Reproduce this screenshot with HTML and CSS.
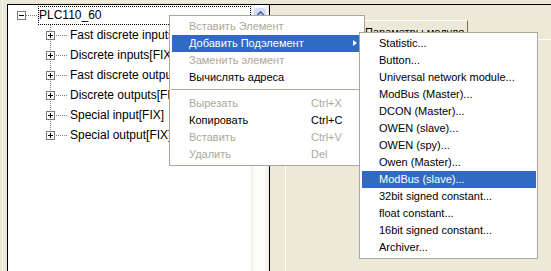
FILE: index.html
```html
<!DOCTYPE html>
<html lang="ru">
<head>
<meta charset="utf-8">
<title>PLC110_60</title>
<link rel="stylesheet" href="styles.css">
</head>
<body>
<div class="screen">
  <div class="frame">
    <div class="treebox">
      <div class="tree">
        <div class="row root">
          <svg class="exp" width="9" height="9" viewBox="0 0 9 9"><rect x="0.5" y="0.5" width="8" height="8" fill="#fff" stroke="#7a7a7a"/><path d="M2 4.5h5" stroke="#000"/></svg>
          <span class="conn root-conn"></span>
          <span class="label focus">PLC110_60</span>
        </div>
        <div class="children">
          <div class="row child">
            <svg class="exp" width="9" height="9" viewBox="0 0 9 9"><rect x="0.5" y="0.5" width="8" height="8" fill="#fff" stroke="#7a7a7a"/><path d="M2 4.5h5M4.5 2v5" stroke="#000"/></svg>
            <span class="conn"></span>
            <span class="label">Fast discrete inputs[FIX]</span>
          </div>
          <div class="row child">
            <svg class="exp" width="9" height="9" viewBox="0 0 9 9"><rect x="0.5" y="0.5" width="8" height="8" fill="#fff" stroke="#7a7a7a"/><path d="M2 4.5h5M4.5 2v5" stroke="#000"/></svg>
            <span class="conn"></span>
            <span class="label">Discrete inputs[FIX]</span>
          </div>
          <div class="row child">
            <svg class="exp" width="9" height="9" viewBox="0 0 9 9"><rect x="0.5" y="0.5" width="8" height="8" fill="#fff" stroke="#7a7a7a"/><path d="M2 4.5h5M4.5 2v5" stroke="#000"/></svg>
            <span class="conn"></span>
            <span class="label">Fast discrete outputs[FIX]</span>
          </div>
          <div class="row child">
            <svg class="exp" width="9" height="9" viewBox="0 0 9 9"><rect x="0.5" y="0.5" width="8" height="8" fill="#fff" stroke="#7a7a7a"/><path d="M2 4.5h5M4.5 2v5" stroke="#000"/></svg>
            <span class="conn"></span>
            <span class="label">Discrete outputs[FIX]</span>
          </div>
          <div class="row child">
            <svg class="exp" width="9" height="9" viewBox="0 0 9 9"><rect x="0.5" y="0.5" width="8" height="8" fill="#fff" stroke="#7a7a7a"/><path d="M2 4.5h5M4.5 2v5" stroke="#000"/></svg>
            <span class="conn"></span>
            <span class="label">Special input[FIX]</span>
          </div>
          <div class="row child">
            <svg class="exp" width="9" height="9" viewBox="0 0 9 9"><rect x="0.5" y="0.5" width="8" height="8" fill="#fff" stroke="#7a7a7a"/><path d="M2 4.5h5M4.5 2v5" stroke="#000"/></svg>
            <span class="conn"></span>
            <span class="label">Special output[FIX]</span>
          </div>
        </div>
      </div>
      <div class="vscroll">
        <div class="sb-btn">
          <svg width="7" height="5" viewBox="0 0 7 5"><path d="M0.5 4L3.5 1L6.5 4" fill="none" stroke="#4d6185" stroke-width="1.6"/></svg>
        </div>
      </div>
    </div>
    <div class="rightpane">
      <div class="tabctl">
        <div class="tabstrip">
          <div class="tab">Параметры модуля</div>
        </div>
        <div class="tabpage"></div>
      </div>
    </div>
  </div>

  <div class="menu ctx">
    <div class="item disabled"><span class="text">Вставить Элемент</span></div>
    <div class="item hot"><span class="text">Добавить Подэлемент</span><span class="arrow"></span></div>
    <div class="item disabled"><span class="text">Заменить элемент</span></div>
    <div class="item"><span class="text">Вычислять адреса</span></div>
    <div class="sep"></div>
    <div class="item disabled"><span class="text">Вырезать</span><span class="key">Ctrl+X</span></div>
    <div class="item"><span class="text">Копировать</span><span class="key">Ctrl+C</span></div>
    <div class="item disabled"><span class="text">Вставить</span><span class="key">Ctrl+V</span></div>
    <div class="item disabled"><span class="text">Удалить</span><span class="key">Del</span></div>
  </div>

  <div class="menu sub">
    <div class="item"><span class="text">Statistic...</span></div>
    <div class="item"><span class="text">Button...</span></div>
    <div class="item"><span class="text">Universal network module...</span></div>
    <div class="item"><span class="text">ModBus (Master)...</span></div>
    <div class="item"><span class="text">DCON (Master)...</span></div>
    <div class="item"><span class="text">OWEN (slave)...</span></div>
    <div class="item"><span class="text">OWEN (spy)...</span></div>
    <div class="item"><span class="text">Owen (Master)...</span></div>
    <div class="item hot"><span class="text">ModBus (slave)...</span></div>
    <div class="item"><span class="text">32bit signed constant...</span></div>
    <div class="item"><span class="text">float constant...</span></div>
    <div class="item"><span class="text">16bit signed constant...</span></div>
    <div class="item"><span class="text">Archiver...</span></div>
  </div>
</div>
</body>
</html>
```

FILE: styles.css
```css
html, body {
  margin: 0;
  padding: 0;
  background: #ECE9D8;
}

.screen {
  position: relative;
  width: 551px;
  height: 271px;
  overflow: hidden;
  box-sizing: border-box;
  padding: 4px 0 0 7px;
  display: flex;
  background:
    linear-gradient(to right, transparent 2px, #F8F7F2 2px, #F8F7F2 3px, transparent 3px),
    #ECE9D8;
  font-family: "Liberation Sans", Arial, sans-serif;
}

.frame {
  flex: 1;
  display: flex;
  border-top: 1px solid #000;
  border-left: 1px solid #000;
}

.treebox {
  display: flex;
  border-right: 1px solid #000;
}

/* ---------- tree ---------- */
.tree {
  width: 243px;
  background: #fff;
  font-size: 12px;
  color: #000;
}

.row {
  display: flex;
  align-items: flex-start;
  height: 20px;
}

.root {
  padding-left: 9px;
}

.child {
  padding-left: 38px;
}

.exp {
  flex: none;
  margin-top: 6px;
  display: block;
}

.conn {
  flex: none;
  width: 11px;
  height: 20px;
  background: repeating-linear-gradient(to right, #808080 0 1px, transparent 1px 2px) no-repeat;
  background-position: 0 10px;
  background-size: 100% 1px;
}

.child .conn {
  width: 13px;
  background-position: 1px 10px;
}

.label {
  white-space: nowrap;
  line-height: 20px;
  margin-left: 1px;
  padding-left: 1px;
}

.label.focus {
  flex: 1;
  margin: 1px 0 0 1px;
  height: 17px;
  line-height: 17px;
  border: 1px dotted #000;
  padding-left: 0;
}

.children {
  background: repeating-linear-gradient(to bottom, #808080 0 1px, transparent 1px 2px) no-repeat;
  background-position: 42px 0;
  background-size: 1px 111px;
}

/* ---------- scrollbar ---------- */
.vscroll {
  width: 18px;
  background: linear-gradient(to right, #F1EFE7 0, #FDFDFB 22%, #FEFEFD 70%, #EDEBE2 100%);
}

.sb-btn {
  margin: 2px 2px 0 2px;
  height: 16px;
  border: 1px solid #F4F7FE;
  border-radius: 2px;
  background: linear-gradient(to bottom, #D6E1FC, #BCCEF8);
  display: flex;
  justify-content: center;
  padding-top: 3px;
  box-sizing: border-box;
}

.sb-btn svg {
  display: block;
}

/* ---------- right pane / tabs ---------- */
.rightpane {
  flex: 1;
  display: flex;
}

.tabctl {
  flex: 1;
  margin-left: 15px;
  display: flex;
  flex-direction: column;
}

.tabstrip {
  display: flex;
  padding: 15px 0 0 75px;
  height: 34px;
  box-sizing: border-box;
}

.tab {
  font-size: 11px;
  line-height: 13px;
  color: #000;
  white-space: nowrap;
  padding: 5px 3px 0 4px;
  border-top: 1px solid #fff;
  border-left: 1px solid #fff;
  border-right: 1px solid #716F64;
  height: 19px;
  box-sizing: border-box;
}

.tabpage {
  flex: 1;
  border-top: 1px solid #fff;
  border-left: 1px solid #fff;
}

/* ---------- popup menus ---------- */
.menu {
  position: absolute;
  background: #fff;
  border: 1px solid #ACA899;
  font-size: 11px;
  color: #000;
  box-sizing: border-box;
}

.ctx {
  left: 169px;
  top: 15px;
  width: 196px;
  padding: 2px;
}

.sub {
  left: 359px;
  top: 32px;
  width: 179px;
  padding: 2px 1px 2px 2px;
}

.item {
  position: relative;
  display: grid;
  grid-template-columns: 122px 1fr;
  height: 17px;
  line-height: 17px;
  padding-left: 17px;
  white-space: nowrap;
}

.item.disabled {
  color: #ACA899;
}

.item.hot {
  background: #316AC5;
  color: #fff;
}

.arrow {
  position: absolute;
  right: 5px;
  top: 5px;
  width: 0;
  height: 0;
  border-top: 3.5px solid transparent;
  border-bottom: 3.5px solid transparent;
  border-left: 4px solid #fff;
}

.sep {
  height: 1px;
  margin: 3px -2px 5px -1px;
  background: #ACA899;
}
```
